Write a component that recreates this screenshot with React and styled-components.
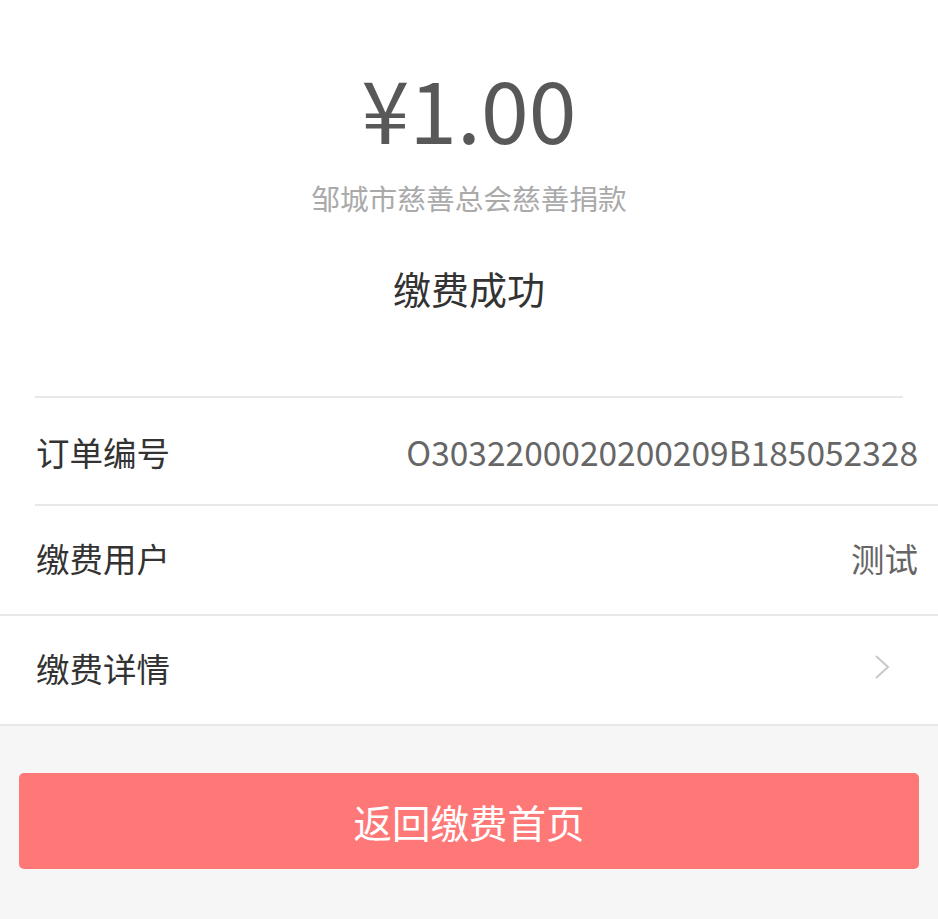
import React from "react";
import styled, { createGlobalStyle } from "styled-components";

const Global = createGlobalStyle`
  html, body { margin: 0; padding: 0; background: #f6f6f6; }
  body { font-family: "Noto Sans CJK SC", "Noto Sans", sans-serif; }
`;

const Page = styled.div`
  width: 938px;
  min-height: 919px;
  background: #f6f6f6;
  display: flex;
  flex-direction: column;
`;

const Card = styled.div`
  background: #fff;
  display: flex;
  flex-direction: column;
`;

const Header = styled.div`
  display: flex;
  flex-direction: column;
  align-items: center;
  padding-top: 52px;
  height: 396px;
  box-sizing: border-box;
`;

const Amount = styled.div`
  font-size: 86px;
  line-height: 110px;
  color: #585858;
  font-family: "Noto Sans CJK SC", sans-serif;
`;

const Org = styled.div`
  font-size: 28.7px;
  line-height: 40px;
  color: #aaa;
  margin-top: 16px;
`;

const Status = styled.div`
  font-size: 38px;
  line-height: 50px;
  color: #333;
  margin-top: 45px;
`;

const Divider = styled.div`
  height: 2px;
  background: #e8e8e8;
  margin: 0 ${(p) => p.$right || 0}px 0 ${(p) => p.$left || 0}px;
`;

const ListRow = styled.div`
  height: ${(p) => p.$h || 108}px;
  display: flex;
  align-items: center;
  justify-content: space-between;
  padding: 0 20px ${(p) => p.$pb || 0}px 36px;
  box-sizing: border-box;
`;

const Label = styled.span`
  font-size: 33.5px;
  color: #333;
`;

const Value = styled.span`
  font-size: 33.5px;
  color: #666;
`;

const Chevron = styled.svg`
  width: 16px;
  height: 26px;
  margin-right: 28px;
`;

const ButtonWrap = styled.div`
  padding: 47px 19px;
`;

const Button = styled.button`
  width: 100%;
  height: 96px;
  border: none;
  border-radius: 5px;
  background: #ff7878;
  color: #fff;
  font-size: 38.5px;
  font-family: "Noto Sans CJK SC", sans-serif;
  cursor: pointer;
`;

export default function App() {
  return (
    <Page>
      <Global />
      <Card>
        <Header>
          <Amount>¥1.00</Amount>
          <Org>邹城市慈善总会慈善捐款</Org>
          <Status>缴费成功</Status>
        </Header>
        <Divider $left={35} $right={35} />
        <ListRow $h={106}>
          <Label>订单编号</Label>
          <Value>O3032200020200209B185052328</Value>
        </ListRow>
        <Divider $left={35} />
        <ListRow $pb={6}>
          <Label>缴费用户</Label>
          <Value>测试</Value>
        </ListRow>
        <Divider />
        <ListRow $pb={6}>
          <Label>缴费详情</Label>
          <Chevron viewBox="0 0 16 26">
            <path d="M2 2 L14 13 L2 24" fill="none" stroke="#c8c8c8" strokeWidth="2" />
          </Chevron>
        </ListRow>
        <Divider />
      </Card>
      <ButtonWrap>
        <Button>返回缴费首页</Button>
      </ButtonWrap>
    </Page>
  );
}
